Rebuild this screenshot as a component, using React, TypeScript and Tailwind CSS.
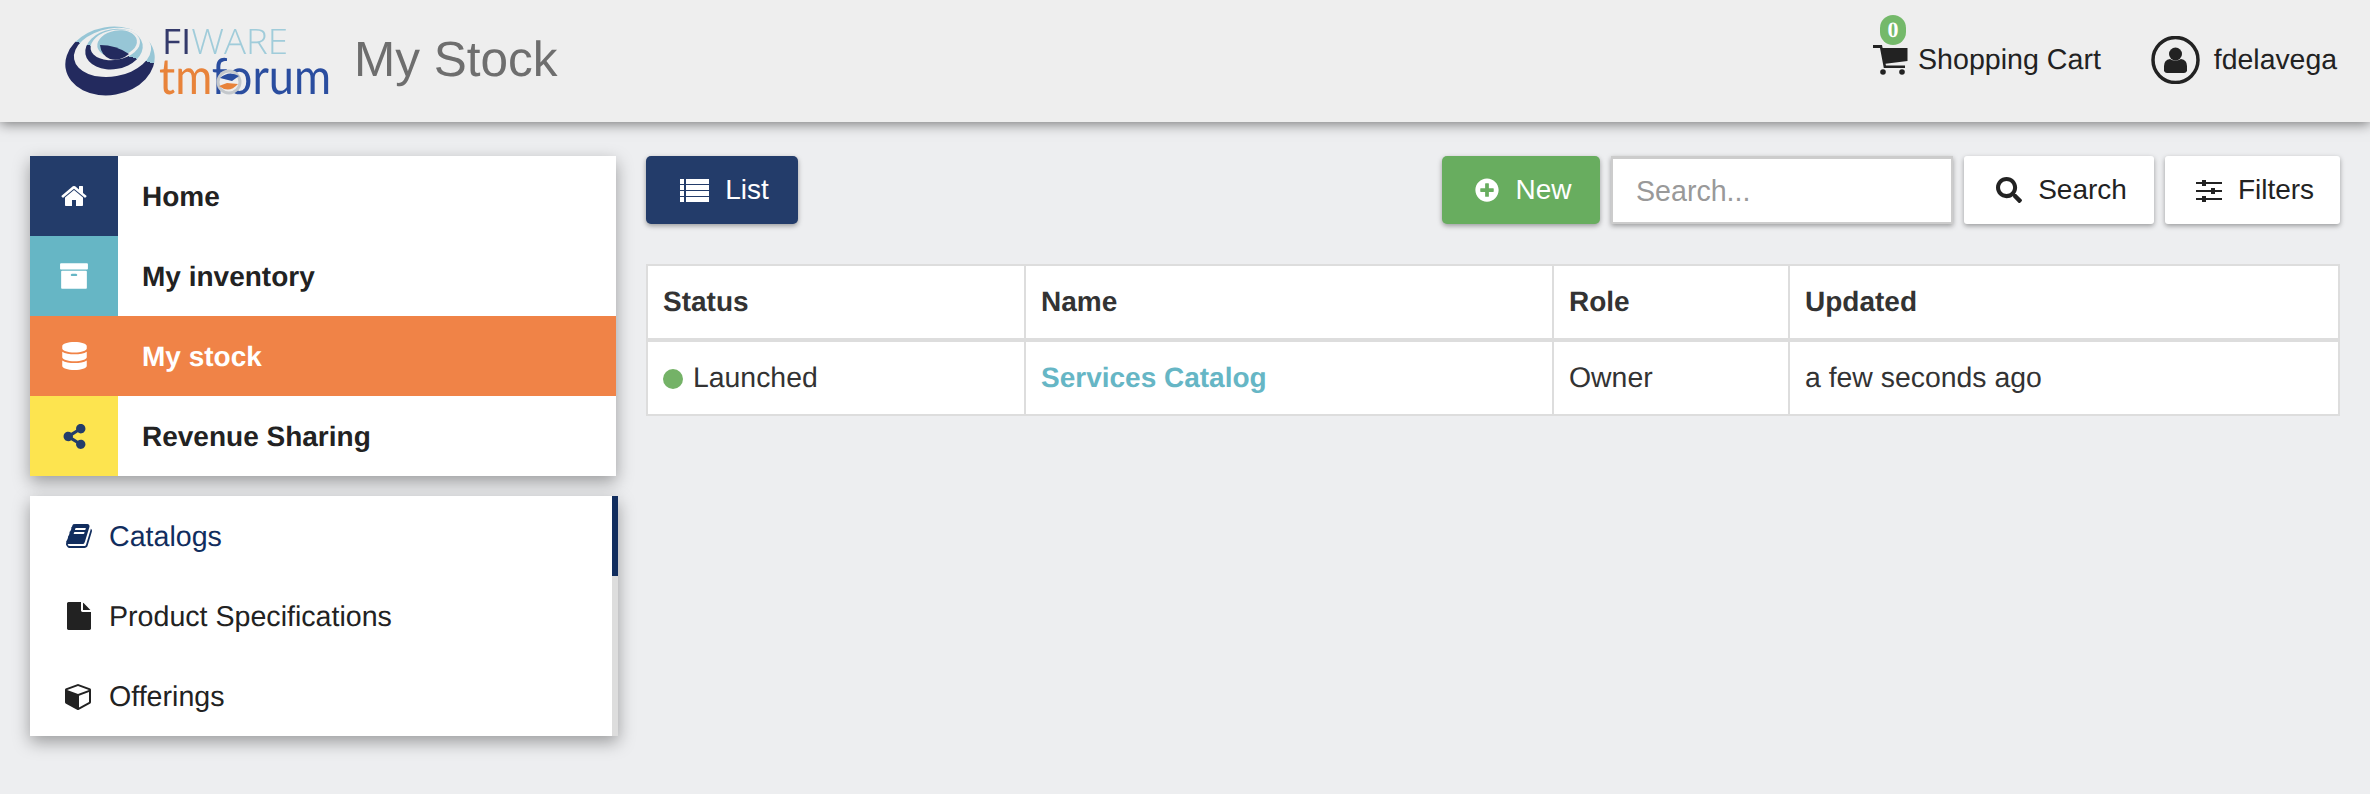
import { FaDatabase, FaPlusCircle, FaSearch, FaShareAlt } from 'react-icons/fa';

// font awesome 4 glyphs, on their 1792 grid
const paths = {
  home: 'M1472 992v480q0 26-19 45t-45 19h-384v-384h-256v384h-384q-26 0-45-19t-19-45v-480q0-1 .5-3t.5-3l575-474 575 474q1 2 1 6zm223-69l-62 74q-8 9-21 11h-3q-13 0-21-7l-692-577-692 577q-12 8-24 7-13-2-21-11l-62-74q-8-10-7-23.500t11-21.500l719-599q32-26 76-26t76 26l244 204v-195q0-14 9-23t23-9h192q14 0 23 9t9 23v408l219 182q10 8 11 21.500t-7 23.500z',
  archive: 'M1088 832q0-26-19-45t-45-19h-256q-26 0-45 19t-19 45 19 45 45 19h256q26 0 45-19t19-45zm576-192v960q0 26-19 45t-45 19h-1408q-26 0-45-19t-19-45v-960q0-26 19-45t45-19h1408q26 0 45 19t19 45zm64-448v256q0 26-19 45t-45 19h-1536q-26 0-45-19t-19-45v-256q0-26 19-45t45-19h1536q26 0 45 19t19 45z',
  book: 'M1703 478q40 57 18 129l-275 906q-19 64-76.500 107.500t-122.500 43.500h-923q-77 0-148.500-53.500t-99.500-131.500q-24-67-2-127 0-4 3-27t4-37q1-8-3-21.500t-3-19.500q2-11 8-21t16.500-23.500 16.500-23.500q23-38 45-91.500t30-91.500q3-10 .5-30t-.5-28q3-11 17-28t17-23q21-36 42-92t25-90q1-9-2.500-32t.5-28q4-13 22-30.500t22-22.500q19-26 42.500-84.500t27.500-96.500q1-8-3-25.500t-2-26.500q2-8 9-18t18-23 17-21q8-12 16.500-30.500t15-35 16-36 19.500-32 26.500-23.500 36-11.500 47.500 5.500l-1 3q38-9 51-9h761q74 0 114 56t18 130l-274 906q-36 119-71.500 153.500t-128.500 34.500h-869q-27 0-38 15-11 16-1 43 24 70 144 70h923q29 0 56-15.500t35-41.500l300-987q7-22 5-57 38 15 59 43zm-1064 2q-4 13 2 22.500t20 9.500h608q13 0 25.500-9.500t16.500-22.500l21-64q4-13-2-22.500t-20-9.500h-608q-13 0-25.500 9.500t-16.500 22.500zm-83 256q-4 13 2 22.500t20 9.500h608q13 0 25.500-9.500t16.500-22.500l21-64q4-13-2-22.500t-20-9.500h-608q-13 0-25.500 9.500t-16.500 22.500z',
  file: 'M1152 512v-472q22 14 36 28l408 408q14 14 28 36h-472zm-128 32q0 40 28 68t68 28h544v1056q0 40-28 68t-68 28h-1344q-40 0-68-28t-28-68v-1600q0-40 28-68t68-28h800v544z',
  cube: 'M896 1629l640-349v-636l-640 233v752zm-64-865l698-254-698-254-698 254zm832-252v768q0 35-18 65t-49 47l-704 384q-28 16-61 16t-61-16l-704-384q-31-17-49-47t-18-65v-768q0-40 23-73t61-47l704-256q22-8 44-8t44 8l704 256q38 14 61 47t23 73z',
};

function Fa4({ d, className }: { d: string; className?: string }) {
  return (
    <svg viewBox="0 0 1792 1792" fill="currentColor" className={className}>
      <path d={d} />
    </svg>
  );
}

function Logo() {
  return (
    <svg width="266" height="91" viewBox="0 -10 266 91" className="blur-[0.5px] -my-[10px]">
      <defs>
        <linearGradient id="swirl" gradientUnits="userSpaceOnUse" x1="47.300" y1="46.200" x2="58.100" y2="7.800" gradientTransform="rotate(10 46 35)">
          <stop offset="0.5" stopColor="#232a5e" />
          <stop offset="0.5" stopColor="#97c6d6" />
        </linearGradient>
      </defs>
      <g transform="rotate(-10 46 35)">
        <ellipse cx="46" cy="35" rx="45" ry="34" fill="url(#swirl)" />
        <ellipse cx="50" cy="27" rx="39" ry="24" fill="#eee" />
        <ellipse cx="52" cy="24" rx="29" ry="20" fill="url(#swirl)" />
        <ellipse cx="54" cy="20" rx="25" ry="15" fill="#eee" />
        <ellipse cx="56" cy="19" rx="20" ry="13" fill="#97c6d6" />
      </g>
      <path d="M36 19 Q52 19 65 28 Q55 36 46 33 Q37 29 36 19Z" fill="#232a5e" />
      <text x="98" y="28" fontFamily="'Open Sans', sans-serif" fontWeight="300" fontSize="35" textLength="126" lengthAdjust="spacingAndGlyphs">
        <tspan fill="#343a6b" fontWeight="400">FI</tspan>
        <tspan fill="#a0ccda">WARE</tspan>
      </text>
      <text x="95" y="68" fontFamily="Lato, sans-serif" fontSize="50" textLength="172" lengthAdjust="spacingAndGlyphs">
        <tspan fill="#e8833a">tm</tspan>
        <tspan fill="#2a4d9f">forum</tspan>
      </text>
      <circle cx="165" cy="56" r="11" fill="#eee" stroke="#c4c8cc" strokeWidth="3" />
      <path d="M156 52 Q165 44 175 50 L168 55 Z" fill="#2a4d9f" />
      <path d="M155 60 Q165 68 174 58 L163 57 Z" fill="#e8833a" />
    </svg>
  );
}

function CartIcon() {
  return (
    <svg width="35" height="30" viewBox="0 0 35 30" fill="#222">
      <path d="M0 0 H9 L9.600 3 H34.500 V16 L12.500 18.800 L13 20.500 H32 V23 H10.800 L7 3 H0Z" />
      <circle cx="10" cy="27" r="2.800" />
      <circle cx="29" cy="27" r="2.800" />
    </svg>
  );
}

function ListIcon() {
  return (
    <svg width="29" height="23" viewBox="0 0 29 23" fill="currentColor">
      {[0, 6, 12, 18].map((y) => (
        <g key={y}>
          <rect x="0" y={y} width="4" height="5" />
          <rect x="6" y={y} width="23" height="5" />
        </g>
      ))}
    </svg>
  );
}

function SlidersIcon() {
  return (
    <svg width="26" height="23" viewBox="0 0 26 23" fill="currentColor">
      <rect x="0" y="3" width="26" height="2" />
      <rect x="0" y="11" width="26" height="2" />
      <rect x="0" y="19" width="26" height="2" />
      <rect x="6" y="1" width="4" height="6" />
      <rect x="15" y="9" width="4" height="6" />
      <rect x="6" y="17" width="4" height="6" />
    </svg>
  );
}

function UserCircle() {
  return (
    <svg width="49" height="48" viewBox="0 0 49 48">
      <circle cx="24.500" cy="24" r="22.500" fill="none" stroke="#222" strokeWidth="3.500" />
      <circle cx="24.500" cy="18" r="6.500" fill="#222" />
      <path d="M13 35 v-5 q0-6 6-7 q5 3 11 0 q6 1 6 7 v5 q-1 2-3 2 h-17 q-2 0-3-2Z" fill="#222" />
    </svg>
  );
}

const mainMenu = [
  { label: 'Home', tile: 'bg-[#233c6a] text-white', icon: <Fa4 d={paths.home} className="w-[28px] h-[28px]" /> },
  { label: 'My inventory', tile: 'bg-[#66b6c5] text-white', icon: <Fa4 d={paths.archive} className="w-[30px] h-[30px]" /> },
  { label: 'My stock', tile: 'bg-[#f08347] text-white', active: true, icon: <FaDatabase className="w-[25px] h-[28px]" /> },
  { label: 'Revenue Sharing', tile: 'bg-[#fde44f] text-[#233c6a]', icon: <FaShareAlt className="w-[25px] h-[25px]" /> },
];

const subMenu = [
  { label: 'Catalogs', active: true, icon: <Fa4 d={paths.book} className="w-[28px] h-[28px]" /> },
  { label: 'Product Specifications', icon: <Fa4 d={paths.file} className="w-[28px] h-[28px]" /> },
  { label: 'Offerings', icon: <Fa4 d={paths.cube} className="w-[28px] h-[28px]" /> },
];

const cellCls = 'border-2 border-[#ddd] px-[15px] text-left';
const btnCls = 'flex items-center justify-center gap-[16px] pl-[5px] text-[28px] shadow-[0_2px_5px_rgba(0,0,0,0.35)]';

export default function App() {
  return (
    <div className="min-h-[794px] bg-[#edeef0] text-[28.6px] leading-[40px] text-[#222] [text-rendering:geometricPrecision] font-['Liberation_Sans',Arial,sans-serif]">
      <header className="h-[122px] bg-[#eee] flex items-center justify-between pl-[64px] pr-[33px] shadow-[0_2px_12px_rgba(0,0,0,0.5)] relative">
        <div className="flex items-center gap-[24px]">
          <Logo />
          <span className="text-[49.5px] leading-[56px] text-[#6e6e6e] -mt-[2px]">My Stock</span>
        </div>
        <div className="flex items-center gap-[50px] -mt-[3px]">
          <div className="relative flex items-center gap-[10px]">
            <span className="absolute left-[7px] top-[-25px] z-10 w-[26px] h-[30px] rounded-[13px] bg-[#74b96a] text-white text-[22px] leading-[30px] text-center font-bold font-['Liberation_Serif',serif]">0</span>
            <CartIcon />
            <span>Shopping Cart</span>
          </div>
          <div className="flex items-center gap-[14px] text-[28.4px]">
            <UserCircle />
            <span>fdelavega</span>
          </div>
        </div>
      </header>

      <div className="flex gap-[30px] pl-[30px] pr-[30px] pt-[34px]">
        <aside className="w-[586px] shrink-0">
          <nav className="bg-white shadow-[0_6px_16px_rgba(0,0,0,0.35)]">
            {mainMenu.map((item) => (
              <div key={item.label} className={`flex h-20 items-center font-bold text-[28px] ${item.active ? 'bg-[#f08347] text-white' : ''}`}>
                <div className={`w-[88px] h-20 flex items-center justify-center ${item.tile}`}>{item.icon}</div>
                <span className="ml-[24px] pt-[1px]">{item.label}</span>
              </div>
            ))}
          </nav>
          <nav className="mt-5 w-[588px] flex bg-white shadow-[0_6px_16px_rgba(0,0,0,0.35)]">
            <div className="flex-1">
              {subMenu.map((item) => (
                <div key={item.label} className={`flex h-20 items-center pl-[35px] gap-[16px] ${item.active ? 'text-[#112d5e]' : ''}`}>
                  {item.icon}
                  <span className="pt-[1px]">{item.label}</span>
                </div>
              ))}
            </div>
            <div className="w-[6px] bg-[#ddd]">
              <div className="h-20 bg-[#112d5e]" />
            </div>
          </nav>
        </aside>

        <main className="flex-1 min-w-0">
          <div className="flex justify-between h-[68px]">
            <button className={`${btnCls} w-[152px] rounded-[5px] bg-[#233c6a] text-white`}>
              <ListIcon />
              List
            </button>
            <div className="flex gap-[11px]">
              <button className={`${btnCls} w-[158px] rounded-[5px] bg-[#68ad5f] text-white`}>
                <FaPlusCircle className="w-[24px] h-[24px]" />
                New
              </button>
              <input
                placeholder="Search..."
                className="w-[342px] px-[23px] bg-white border-2 border-[#ccc] border-t-[3px] shadow-[0_2px_5px_rgba(0,0,0,0.35)] placeholder:text-[#999]"
              />
              <button className={`${btnCls} w-[190px] rounded-[3px] bg-white`}>
                <FaSearch className="w-[26px] h-[26px]" />
                Search
              </button>
              <button className={`${btnCls} w-[175px] rounded-[3px] bg-white`}>
                <SlidersIcon />
                Filters
              </button>
            </div>
          </div>

          <table className="mt-10 w-full table-fixed border-collapse bg-white text-[#333] text-[28.4px]">
            <colgroup>
              <col className="w-[378px]" />
              <col className="w-[528px]" />
              <col className="w-[236px]" />
              <col />
            </colgroup>
            <thead>
              <tr className="h-[75px]">
                {['Status', 'Name', 'Role', 'Updated'].map((h) => (
                  <th key={h} className={`${cellCls} border-b-4 font-bold text-[28px]`}>{h}</th>
                ))}
              </tr>
            </thead>
            <tbody>
              <tr className="h-[75px]">
                <td className={cellCls}>
                  <span className="inline-block w-5 h-5 rounded-full bg-[#74b267] mr-[10px] align-[-2px]" />
                  Launched
                </td>
                <td className={`${cellCls} font-bold text-[28px] text-[#66b6c5]`}>Services Catalog</td>
                <td className={cellCls}>Owner</td>
                <td className={cellCls}>a few seconds ago</td>
              </tr>
            </tbody>
          </table>
        </main>
      </div>
    </div>
  );
}
